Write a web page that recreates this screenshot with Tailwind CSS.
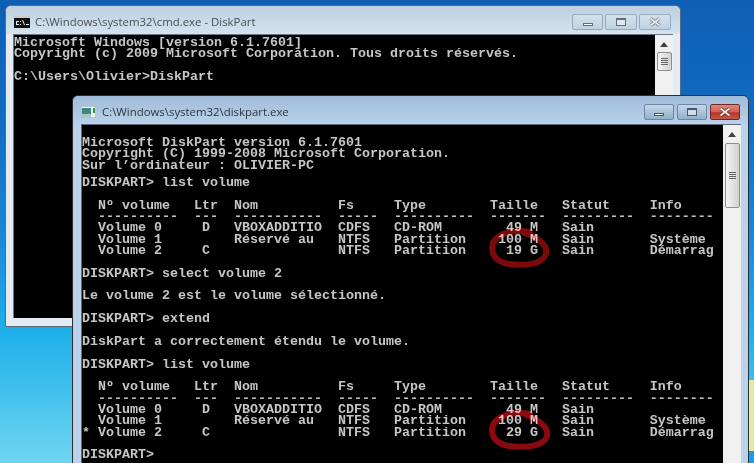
<!DOCTYPE html>
<html lang="fr">
<head>
<meta charset="utf-8"/>
<title>DiskPart</title>
<script src="https://cdn.jsdelivr.net/npm/@tailwindcss/browser@4"></script>
</head>
<body class="relative w-[754px] h-[463px] overflow-hidden bg-[linear-gradient(180deg,#0f5fb4_0%,#0f6cc2_25%,#1a86d8_50%,#1fb0ea_72%,#6fd5f1_100%)]">

  <!-- wallpaper strip on the right -->
  <div class="absolute left-[749px] top-[380px] w-[5px] h-[71px] bg-[#dcedaa]"></div>
  <div class="absolute left-[749px] top-[451px] w-[5px] h-[12px] bg-[#1b9ce8]"></div>

  <!-- cmd.exe window (inactive) -->
  <section class="absolute left-[5px] top-[5px] w-[676px] h-[322px] flex flex-col rounded-t-[6px] border border-[#5f6a74] bg-[#e3ecf4]">
    <header class="h-[28px] shrink-0 flex items-center pt-[4px] pl-[8px] pr-[9px] rounded-t-[6px] bg-[linear-gradient(180deg,#bdd0e0,#d3e3f0)]">
      <svg width="16" height="12" viewBox="0 0 16 12" class="shrink-0">
        <rect width="16" height="12" fill="#111"/>
        <rect x="0" y="0" width="16" height="2" fill="#c9c9c9"/>
        <path d="M2 5h3v1H3v2h2v1H2zM6 5h1v1H6zM6 8h1v1H6zM8 4h1l2 5h-1zM12 8h3v1h-3z" fill="#eee"/>
      </svg>
      <span class="ml-[5px] font-['Open_Sans'] text-[11.4px] text-[#4a4f55] whitespace-nowrap blur-[0.2px]">C:\Windows\system32\cmd.exe - DiskPart</span>
      <div class="ml-auto flex gap-[2px]">
        <div class="w-[31px] h-[16px] flex items-center justify-center rounded-[2px] border border-[#98abbd] bg-[linear-gradient(180deg,#d3e1ec,#bfd2e2)]">
          <span class="mt-[5px] w-[10px] h-[3px] border border-[#5f6e7c] bg-white"></span>
        </div>
        <div class="w-[32px] h-[16px] flex items-center justify-center rounded-[2px] border border-[#98abbd] bg-[linear-gradient(180deg,#d3e1ec,#bfd2e2)]">
          <span class="w-[10px] h-[8px] border border-[#5f6e7c] border-t-2 bg-[#dfe8ef]"></span>
        </div>
        <div class="w-[32px] h-[16px] flex items-center justify-center rounded-[2px] border border-[#98abbd] bg-[linear-gradient(180deg,#d3e1ec,#bfd2e2)]">
          <svg width="12" height="10" viewBox="0 0 12 10"><path d="M1.5 1.5 10.5 8.5M10.5 1.5 1.5 8.5" stroke="#5f6e7c" stroke-width="3.2"/><path d="M1.5 1.5 10.5 8.5M10.5 1.5 1.5 8.5" stroke="#eef2f5" stroke-width="1.6"/></svg>
        </div>
      </div>
    </header>
    <div class="flex-1 min-h-0 mx-[7px] mb-[8px] flex border-t border-[#6b7682] border-l border-l-[#6b7682]">
      <pre class="flex-1 min-w-0 overflow-hidden bg-black text-[#c6c6c6] font-['Liberation_Mono'] font-bold text-[13.33px] leading-[11.35px] pt-[2px] blur-[0.3px]">Microsoft Windows [version 6.1.7601]
Copyright (c) 2009 Microsoft Corporation. Tous droits réservés.

C:\Users\Olivier&gt;DiskPart</pre>
      <aside class="w-[18px] shrink-0 flex flex-col items-center bg-[#f0f0f0]">
        <svg width="8" height="5" viewBox="0 0 8 5" class="mt-[7px]"><path d="M0 5 4 0l4 5z" fill="#404040"/></svg>
        <div class="mt-[5px] w-[15px] h-[19px] flex flex-col items-center justify-center gap-[1px] rounded-[2px] border border-[#8f8f8f] bg-[linear-gradient(90deg,#f4f4f4,#d2d2d2)]">
          <span class="w-[7px] h-px bg-[#666]"></span><span class="w-[7px] h-px bg-[#666]"></span><span class="w-[7px] h-px bg-[#666]"></span><span class="w-[7px] h-px bg-[#666]"></span>
        </div>
      </aside>
    </div>
  </section>

  <!-- diskpart.exe window (active) -->
  <section class="absolute left-[72px] top-[95px] w-[677px] h-[380px] flex flex-col rounded-t-[6px] border border-[#2b2f33] bg-[#bbd2ea]">
    <header class="h-[28px] shrink-0 flex items-center pt-[4px] pl-[8px] pr-[8px] rounded-t-[6px] bg-[linear-gradient(180deg,#9fbcd9,#b9d1e9)]">
      <svg width="15" height="12" viewBox="0 0 15 12" class="shrink-0">
        <rect width="15" height="12" fill="#f2f2f2" stroke="#8b949b"/>
        <rect x="1" y="2" width="9" height="9" fill="#3f8a80"/>
        <rect x="1" y="8" width="9" height="3" fill="#a8c8b8"/>
        <rect x="12" y="2" width="2" height="5" fill="#2f9a3a"/>
      </svg>
      <span class="ml-[6px] font-['Open_Sans'] text-[11.4px] text-[#2f3439] whitespace-nowrap blur-[0.2px]">C:\Windows\system32\diskpart.exe</span>
      <div class="ml-auto flex gap-[3px]">
        <div class="w-[30px] h-[16px] flex items-center justify-center rounded-[2px] border border-[#6d87a0] bg-[linear-gradient(180deg,#c4d8e8,#8fb0cc)]">
          <span class="mt-[5px] w-[10px] h-[3px] border border-[#47576a] bg-white"></span>
        </div>
        <div class="w-[30px] h-[16px] flex items-center justify-center rounded-[2px] border border-[#6d87a0] bg-[linear-gradient(180deg,#c4d8e8,#8fb0cc)]">
          <span class="w-[10px] h-[8px] border border-[#47576a] border-t-2 bg-[#cfdde8]"></span>
        </div>
        <div class="w-[30px] h-[16px] flex items-center justify-center rounded-[2px] border border-[#6e2a2a] bg-[linear-gradient(180deg,#e0897a_0%,#d2604f_50%,#b8352a_55%,#c2584a_100%)]">
          <svg width="12" height="10" viewBox="0 0 12 10"><path d="M1.5 1.5 10.5 8.5M10.5 1.5 1.5 8.5" stroke="#5e2a2a" stroke-width="3.2"/><path d="M1.5 1.5 10.5 8.5M10.5 1.5 1.5 8.5" stroke="#f4efee" stroke-width="1.8"/></svg>
        </div>
      </div>
    </header>
    <div class="flex-1 min-h-0 ml-[8px] mr-[7px] flex border-t border-l border-[#5e6a76]">
      <div class="flex-1 min-w-0 overflow-hidden bg-black text-[#c6c6c6] font-['Liberation_Mono'] font-bold text-[13.33px] leading-[11.35px] blur-[0.3px]">
        <pre class="pt-[12px] font-[inherit]">Microsoft DiskPart version 6.1.7601
Copyright (C) 1999-2008 Microsoft Corporation.
Sur l’ordinateur : OLIVIER-PC</pre>
        <pre class="mt-[6px] font-[inherit]">DISKPART&gt; list volume

  Nº volume   Ltr  Nom          Fs     Type        Taille   Statut     Info
  ----------  ---  -----------  -----  ----------  -------  ---------  --------
  Volume 0     D   VBOXADDITIO  CDFS   CD-ROM        49 M   Sain
  Volume 1         Réservé au   NTFS   Partition    100 M   Sain       Système
  Volume 2     C                NTFS   Partition     19 G   Sain       Démarrag

DISKPART&gt; select volume 2

Le volume 2 est le volume sélectionné.

DISKPART&gt; extend

DiskPart a correctement étendu le volume.

DISKPART&gt; list volume

  Nº volume   Ltr  Nom          Fs     Type        Taille   Statut     Info
  ----------  ---  -----------  -----  ----------  -------  ---------  --------
  Volume 0     D   VBOXADDITIO  CDFS   CD-ROM        49 M   Sain
  Volume 1         Réservé au   NTFS   Partition    100 M   Sain       Système
* Volume 2     C                NTFS   Partition     29 G   Sain       Démarrag

DISKPART&gt;</pre>
      </div>
      <aside class="w-[18px] shrink-0 flex flex-col items-center bg-[#f0f0f0]">
        <svg width="8" height="5" viewBox="0 0 8 5" class="mt-[7px]"><path d="M0 5 4 0l4 5z" fill="#404040"/></svg>
        <div class="mt-[6px] w-[15px] h-[65px] flex flex-col items-center justify-center gap-[1px] rounded-[2px] border border-[#8f8f8f] bg-[linear-gradient(90deg,#f4f4f4,#d2d2d2)]">
          <span class="w-[7px] h-px bg-[#666]"></span><span class="w-[7px] h-px bg-[#666]"></span><span class="w-[7px] h-px bg-[#666]"></span><span class="w-[7px] h-px bg-[#666]"></span>
        </div>
      </aside>
    </div>
  </section>

  <!-- hand drawn red circles around the sizes -->
  <svg class="absolute left-[480px] top-[220px] blur-[0.6px] mix-blend-screen" width="80" height="60" viewBox="0 0 80 60">
    <path d="M50 12C34 9 18 13 13 23C10 33 15 42 29 44C44 46 62 45 66 34C68 26 60 18 44 13" fill="none" stroke="#7d0a0a" stroke-width="6" stroke-linecap="round"/>
  </svg>
  <svg class="absolute left-[480px] top-[402px] blur-[0.6px] mix-blend-screen" width="80" height="60" viewBox="0 0 80 60">
    <path d="M50 12C34 9 18 13 13 23C10 33 15 42 29 44C44 46 64 45 67 34C69 26 60 18 42 11" fill="none" stroke="#8a0a10" stroke-width="6" stroke-linecap="round"/>
  </svg>
</body>
</html>
